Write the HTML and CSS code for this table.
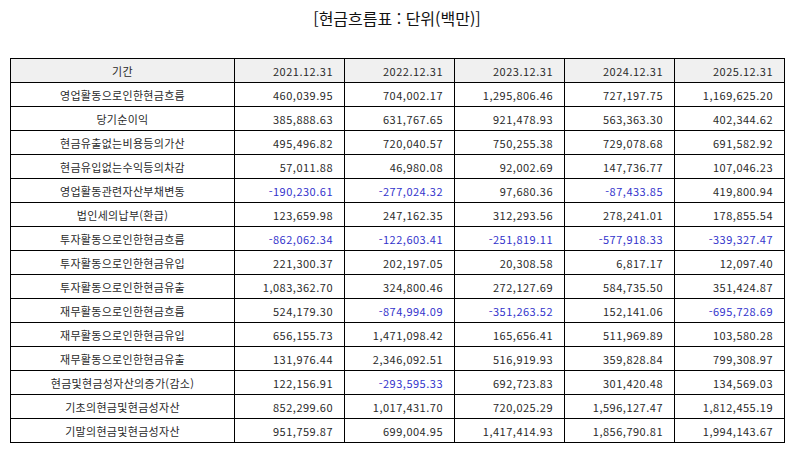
FILE: index.html
```html
<!DOCTYPE html>
<html lang="ko">
<head>
<meta charset="utf-8">
<link rel="stylesheet" href="styles.css">
</head>
<body>
<div class="page">
  <div class="title">[현금흐름표 : 단위(백만)]</div>
  <table class="cf">
    <colgroup>
      <col class="c-label"><col class="c-num"><col class="c-num"><col class="c-num"><col class="c-num"><col class="c-num">
    </colgroup>
    <thead>
      <tr><th class="label">기간</th><th>2021.12.31</th><th>2022.12.31</th><th>2023.12.31</th><th>2024.12.31</th><th>2025.12.31</th></tr>
    </thead>
    <tbody>
      <tr><td class="label">영업활동으로인한현금흐름</td><td>460,039.95</td><td>704,002.17</td><td>1,295,806.46</td><td>727,197.75</td><td>1,169,625.20</td></tr>
      <tr><td class="label">당기순이익</td><td>385,888.63</td><td>631,767.65</td><td>921,478.93</td><td>563,363.30</td><td>402,344.62</td></tr>
      <tr><td class="label">현금유출없는비용등의가산</td><td>495,496.82</td><td>720,040.57</td><td>750,255.38</td><td>729,078.68</td><td>691,582.92</td></tr>
      <tr><td class="label">현금유입없는수익등의차감</td><td>57,011.88</td><td>46,980.08</td><td>92,002.69</td><td>147,736.77</td><td>107,046.23</td></tr>
      <tr><td class="label">영업활동관련자산부채변동</td><td class="neg">-190,230.61</td><td class="neg">-277,024.32</td><td>97,680.36</td><td class="neg">-87,433.85</td><td>419,800.94</td></tr>
      <tr><td class="label">법인세의납부(환급)</td><td>123,659.98</td><td>247,162.35</td><td>312,293.56</td><td>278,241.01</td><td>178,855.54</td></tr>
      <tr><td class="label">투자활동으로인한현금흐름</td><td class="neg">-862,062.34</td><td class="neg">-122,603.41</td><td class="neg">-251,819.11</td><td class="neg">-577,918.33</td><td class="neg">-339,327.47</td></tr>
      <tr><td class="label">투자활동으로인한현금유입</td><td>221,300.37</td><td>202,197.05</td><td>20,308.58</td><td>6,817.17</td><td>12,097.40</td></tr>
      <tr><td class="label">투자활동으로인한현금유출</td><td>1,083,362.70</td><td>324,800.46</td><td>272,127.69</td><td>584,735.50</td><td>351,424.87</td></tr>
      <tr><td class="label">재무활동으로인한현금흐름</td><td>524,179.30</td><td class="neg">-874,994.09</td><td class="neg">-351,263.52</td><td>152,141.06</td><td class="neg">-695,728.69</td></tr>
      <tr><td class="label">재무활동으로인한현금유입</td><td>656,155.73</td><td>1,471,098.42</td><td>165,656.41</td><td>511,969.89</td><td>103,580.28</td></tr>
      <tr><td class="label">재무활동으로인한현금유출</td><td>131,976.44</td><td>2,346,092.51</td><td>516,919.93</td><td>359,828.84</td><td>799,308.97</td></tr>
      <tr><td class="label">현금및현금성자산의증가(감소)</td><td>122,156.91</td><td class="neg">-293,595.33</td><td>692,723.83</td><td>301,420.48</td><td>134,569.03</td></tr>
      <tr><td class="label">기초의현금및현금성자산</td><td>852,299.60</td><td>1,017,431.70</td><td>720,025.29</td><td>1,596,127.47</td><td>1,812,455.19</td></tr>
      <tr><td class="label">기말의현금및현금성자산</td><td>951,759.87</td><td>699,004.95</td><td>1,417,414.93</td><td>1,856,790.81</td><td>1,994,143.67</td></tr>
    </tbody>
  </table>
</div>
</body>
</html>
```

FILE: styles.css
```css
html, body {
  margin: 0;
  padding: 0;
  background: #ffffff;
}
body {
  font-family: "Noto Sans CJK KR", "Noto Sans", sans-serif;
  color: #2a2a2a;
}
.page {
  padding: 0 10px;
}
.title {
  text-align: center;
  font-size: 16px;
  line-height: 20px;
  padding-top: 8px;
  height: 58px;
  box-sizing: border-box;
  color: #111111;
}
.cf {
  width: 774px;
  border-collapse: collapse;
  table-layout: fixed;
  font-size: 11px;
}
.c-label { width: 224px; }
.c-num { width: 110px; }
.cf th, .cf td {
  border: 1px solid #000000;
  height: 23px;
  padding: 0 11px 0 4px;
  text-align: right;
  font-weight: normal;
  line-height: 14px;
  white-space: nowrap;
  letter-spacing: 0.5px;
}
.cf thead th {
  background: #f0f0f0;
}
.cf .label {
  text-align: center;
  padding: 0 4px;
  letter-spacing: 0.3px;
}
.cf .neg {
  color: #3333cc;
}
```
